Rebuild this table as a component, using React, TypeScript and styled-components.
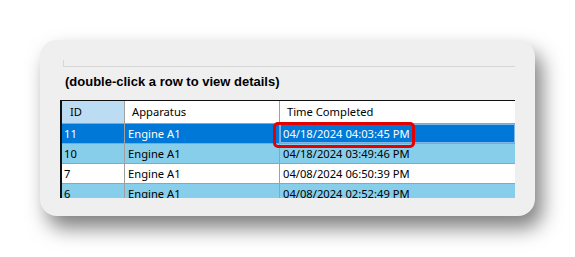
import React from "react";
import styled, { createGlobalStyle } from "styled-components";

const Global = createGlobalStyle`
  html, body { margin: 0; padding: 0; background: #ffffff; }
  body { font-family: "Segoe UI", "Noto Sans", "Liberation Sans", sans-serif; }
`;

const Page = styled.div`
  width: 575px;
  height: 257px;
  padding: 40px 0 0 40px;
  box-sizing: border-box;
  overflow: hidden;
`;

const Card = styled.div`
  width: 495px;
  height: 176px;
  box-sizing: border-box;
  background: #efefef;
  border-radius: 17px;
  box-shadow: 7px 12px 20px rgba(0, 0, 0, 0.5);
  padding: 20px 20px 0 20px;
  display: flex;
  flex-direction: column;
  overflow: hidden;
`;

const GroupEdge = styled.div`
  margin-left: 3px;
  height: 6px;
  border-left: 1px solid #d6d6d6;
  border-bottom: 1px solid #d6d6d6;
`;

const Caption = styled.div`
  margin: 4px 0 0 5px;
  height: 22px;
  line-height: 22px;
  font-family: "Liberation Sans", Arial, sans-serif;
  font-weight: bold;
  font-size: 13px;
  color: #000;
`;

const GridWrap = styled.div`
  position: relative;
  margin-top: 7px;
  height: 97px;
  overflow: hidden;
  background: #a0a0a0;
  border-top: 1px solid #101010;
  border-left: 2px solid #101010;
`;

const Row = styled.div<{ $header?: boolean }>`
  display: grid;
  grid-template-columns: 62px 154px 1fr;
  column-gap: 1px;
  height: ${(p) => (p.$header ? "22px" : "19px")};
  margin-bottom: 1px;
`;

type Tone = "selected" | "blue" | "white" | "headActive" | "head";

const bg: Record<Tone, string> = {
  selected: "#0078d7",
  blue: "#87ceeb",
  white: "#ffffff",
  headActive: "#bcdcf4",
  head: "#ffffff",
};

const Cell = styled.div<{ $tone: Tone; $pad: number; $focus?: boolean }>`
  background: ${(p) => bg[p.$tone]};
  color: ${(p) => (p.$tone === "selected" ? "#ffffff" : "#000000")};
  font-size: 11.2px;
  line-height: ${(p) => (p.$tone === "head" || p.$tone === "headActive" ? "22px" : "19px")};
  padding-left: ${(p) => p.$pad}px;
  white-space: nowrap;
  overflow: hidden;
  box-sizing: border-box;
  box-shadow: ${(p) => (p.$focus ? "inset 1px 1px 0 #7fb6e6, inset -1px -1px 0 #7fb6e6" : "none")};
`;

const Highlight = styled.div`
  position: absolute;
  left: 211px;
  top: 21px;
  width: 142px;
  height: 26px;
  box-sizing: border-box;
  border: 3px solid #e30000;
  border-radius: 5px;
  pointer-events: none;
`;

const rows: { id: string; app: string; time: string; tone: Tone }[] = [
  { id: "11", app: "Engine A1", time: "04/18/2024 04:03:45 PM", tone: "selected" },
  { id: "10", app: "Engine A1", time: "04/18/2024 03:49:46 PM", tone: "blue" },
  { id: "7", app: "Engine A1", time: "04/08/2024 06:50:39 PM", tone: "white" },
  { id: "6", app: "Engine A1", time: "04/08/2024 02:52:49 PM", tone: "blue" },
];

export default function App() {
  return (
    <>
      <Global />
      <Page>
        <Card>
          <GroupEdge />
          <Caption>(double-click a row to view details)</Caption>
          <GridWrap>
            <Row $header>
              <Cell $tone="headActive" $pad={8}>ID</Cell>
              <Cell $tone="head" $pad={7}>Apparatus</Cell>
              <Cell $tone="head" $pad={7}>Time Completed</Cell>
            </Row>
            {rows.map((r, i) => (
              <Row key={r.id}>
                <Cell $tone={r.tone} $pad={2}>{r.id}</Cell>
                <Cell $tone={r.tone} $pad={3}>{r.app}</Cell>
                <Cell $tone={r.tone} $pad={3} $focus={i === 0}>{r.time}</Cell>
              </Row>
            ))}
            <Highlight />
          </GridWrap>
        </Card>
      </Page>
    </>
  );
}
